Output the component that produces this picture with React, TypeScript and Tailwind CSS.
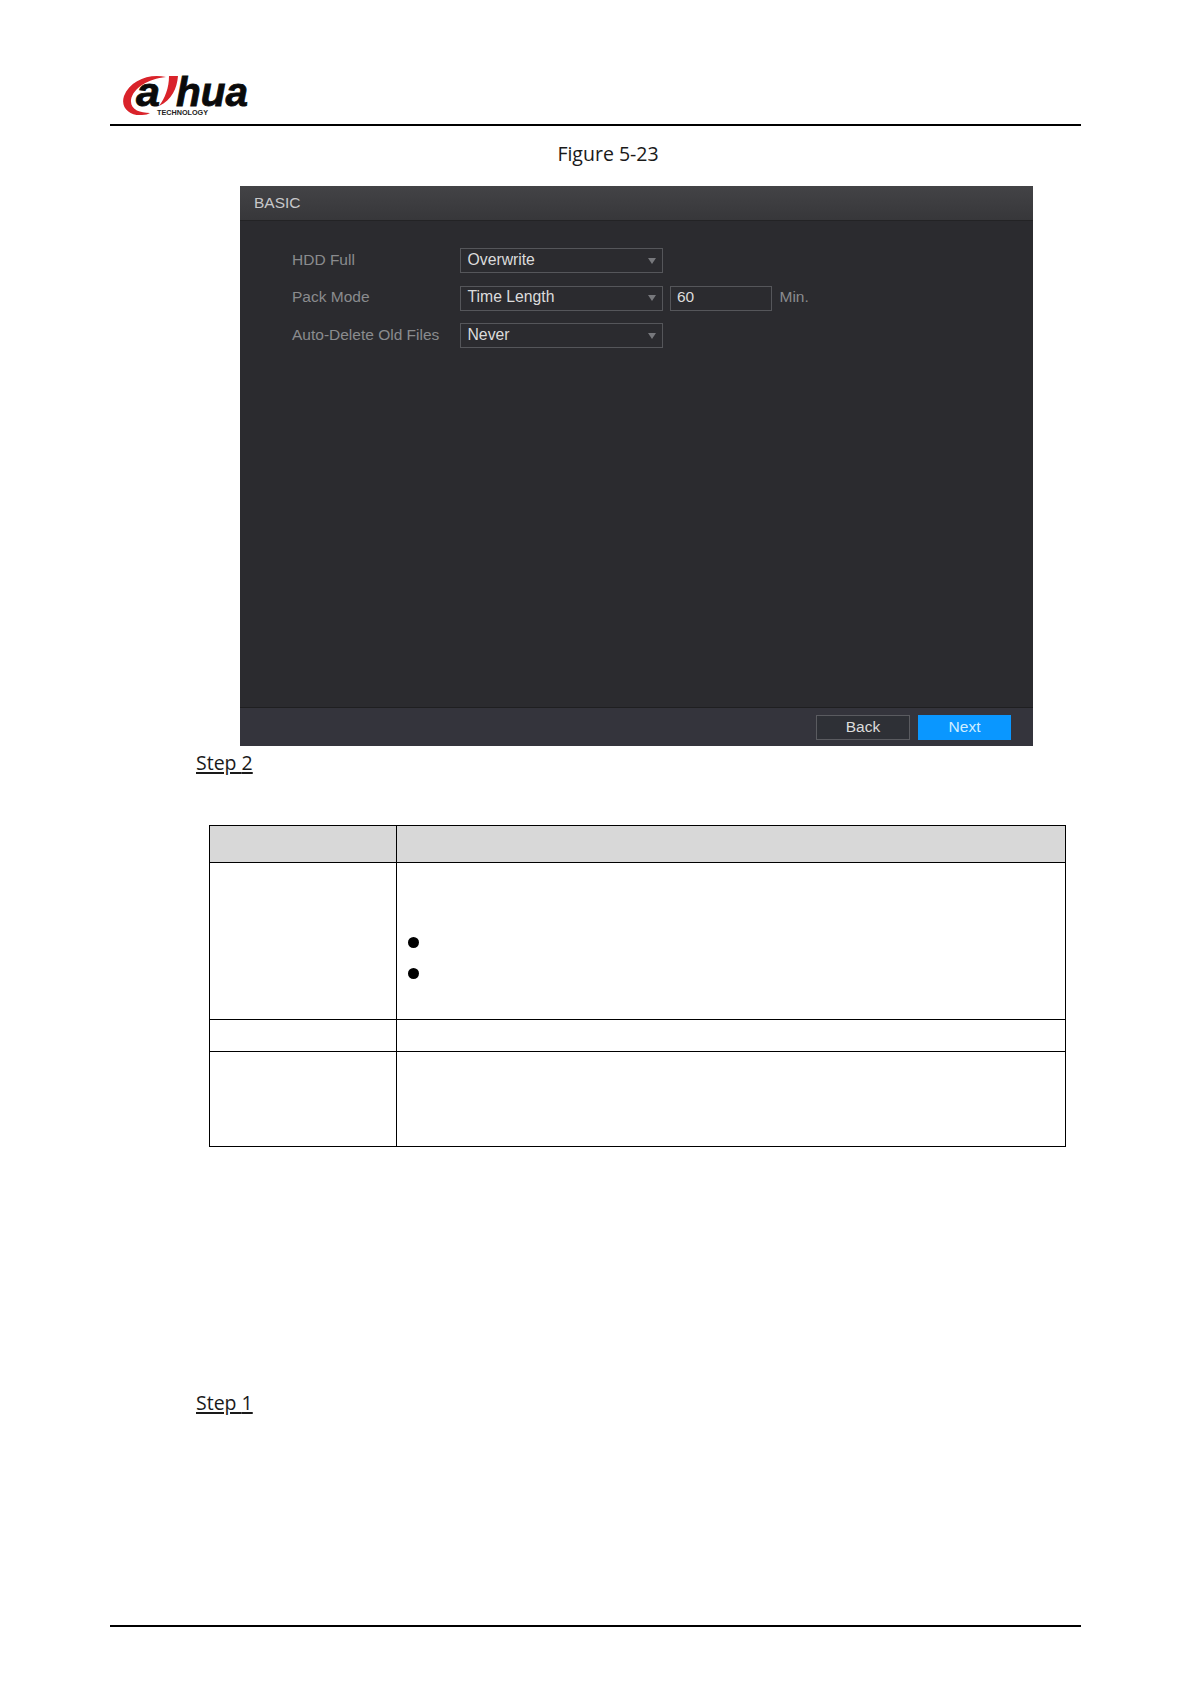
const sans = "font-['Liberation_Sans',Arial,sans-serif]";
const doc = "font-['Open_Sans','Noto_Sans',sans-serif]";
const logoFont = "'Liberation Sans',Arial,sans-serif";

function Logo() {
  return (
    <svg width="128" height="50" viewBox="0 -8 128 50" className="block">
      <path d="M44 3 C28 -1 8 6 2 22 C-2 34 8 42 20 41 C24 41 26 40 28 39 C18 39 8 36 9 26 C11 14 26 5 44 3 Z" fill="#d9232a" />
      <text x="14" y="32" fontFamily={logoFont} fontWeight="700" fontStyle="italic" fontSize="40" textLength="24" lengthAdjust="spacingAndGlyphs" stroke="#0a0a0a" strokeWidth="0.8" fill="#0a0a0a">a</text>
      <path d="M47 2 L56 2 C55 14 50 26 37 32 C43 24 47 14 47 2 Z" fill="#d9232a" />
      <text x="54" y="32" fontFamily={logoFont} fontWeight="700" fontStyle="italic" fontSize="40" textLength="72" lengthAdjust="spacingAndGlyphs" stroke="#0a0a0a" strokeWidth="0.8" fill="#0a0a0a">hua</text>
      <text x="35" y="41" fontFamily={logoFont} fontWeight="700" fontSize="6.5" textLength="51" lengthAdjust="spacingAndGlyphs" fill="#222">TECHNOLOGY</text>
    </svg>
  );
}

function Select({ value }: { value: string }) {
  return (
    <div className="w-[203px] h-[25px] border border-[#55565a] flex items-center justify-between pl-[6.5px] pr-[6px] text-[15.75px] text-[#dcdcdc]">
      <span className="-translate-y-px">{value}</span>
      <span className="w-0 h-0 border-l-[4px] border-r-[4px] border-t-[6px] border-l-transparent border-r-transparent border-t-[#77787c]" />
    </div>
  );
}

function Row({ label, children }: { label: string; children: React.ReactNode }) {
  return (
    <div className="flex items-center h-[25px]">
      <div className="w-[168px] text-[15.5px] text-[#8a8b8e] whitespace-nowrap -translate-y-px">{label}</div>
      {children}
    </div>
  );
}

function Panel() {
  return (
    <div className={`w-[793px] h-[560px] ml-[240px] mt-[19px] flex flex-col bg-[#2b2b2f] ${sans}`}>
      <div className="h-[35px] pl-[14px] flex items-center text-[15.5px] text-[#c8c8ca] bg-gradient-to-b from-[#434346] to-[#37373a] border-b border-[#232325]">BASIC</div>
      <div className="flex-1 pt-[27px] pl-[52px] flex flex-col gap-[12.5px]">
        <Row label="HDD Full"><Select value="Overwrite" /></Row>
        <Row label="Pack Mode">
          <Select value="Time Length" />
          <div className="ml-[7px] w-[102px] h-[25px] border border-[#55565a] pl-[6px] flex items-center text-[15.5px] text-[#dcdcdc]"><span className="-translate-y-px">60</span></div>
          <span className="ml-[7.5px] text-[15.5px] text-[#8a8b8e] -translate-y-px">Min.</span>
        </Row>
        <Row label="Auto-Delete Old Files"><Select value="Never" /></Row>
      </div>
      <div className="h-[39px] border-t border-[#1f1f21] bg-[#34343c] flex items-start justify-end gap-[8px] pt-[7px] pr-[22px]">
        <div className="w-[94px] h-[25px] border border-[#5a5b60] bg-[#2e3036] flex items-center justify-center text-[15.5px] text-[#dcdcdc]"><span className="-translate-y-px">Back</span></div>
        <div className="w-[93px] h-[25px] bg-[#0a97ff] flex items-center justify-center text-[15.5px] text-[#cfeeff]"><span className="-translate-y-px">Next</span></div>
      </div>
    </div>
  );
}

function Step({ n, className }: { n: string; className: string }) {
  return <div className={`pl-[196px] h-[28px] text-[19.5px] leading-[28px] text-[#1a1a1a] ${doc} ${className}`}><span className="underline underline-offset-2 decoration-[1.5px]">Step {n}</span></div>;
}

function Bullet() {
  return <div className="w-[11px] h-[11px] rounded-full bg-black" />;
}

const cell = "border border-black";

export default function App() {
  return (
    <div className="relative w-[1191px] h-[1684px] bg-white overflow-hidden pt-[66px]">
      <div className="pl-[122px]"><Logo /></div>
      <div className="mx-[110px] w-[971px] h-[2px] bg-black mt-[8px]" />
      <div className={`mt-[14px] h-[27px] text-center text-[19.5px] leading-[27px] text-[#1a1a1a] ${doc} pl-[25px]`}>Figure 5-23</div>
      <Panel />
      <Step n="2" className="mt-[3px]" />
      <table className="ml-[209px] mt-[48px] w-[857px] border-collapse table-fixed">
        <colgroup><col className="w-[187px]" /><col /></colgroup>
        <tbody>
          <tr className="h-[37px] bg-[#d8d8d8]"><td className={cell} /><td className={cell} /></tr>
          <tr className="h-[157px]">
            <td className={cell} />
            <td className={`${cell} pl-[11px] align-top`}>
              <div className="pt-[74px] flex flex-col gap-[20px]"><Bullet /><Bullet /></div>
            </td>
          </tr>
          <tr className="h-[32px]"><td className={cell} /><td className={cell} /></tr>
          <tr className="h-[95px]"><td className={cell} /><td className={cell} /></tr>
        </tbody>
      </table>
      <Step n="1" className="mt-[242px]" />
      <div className="mx-[110px] w-[971px] h-[2px] bg-black mt-[208px]" />
    </div>
  );
}
